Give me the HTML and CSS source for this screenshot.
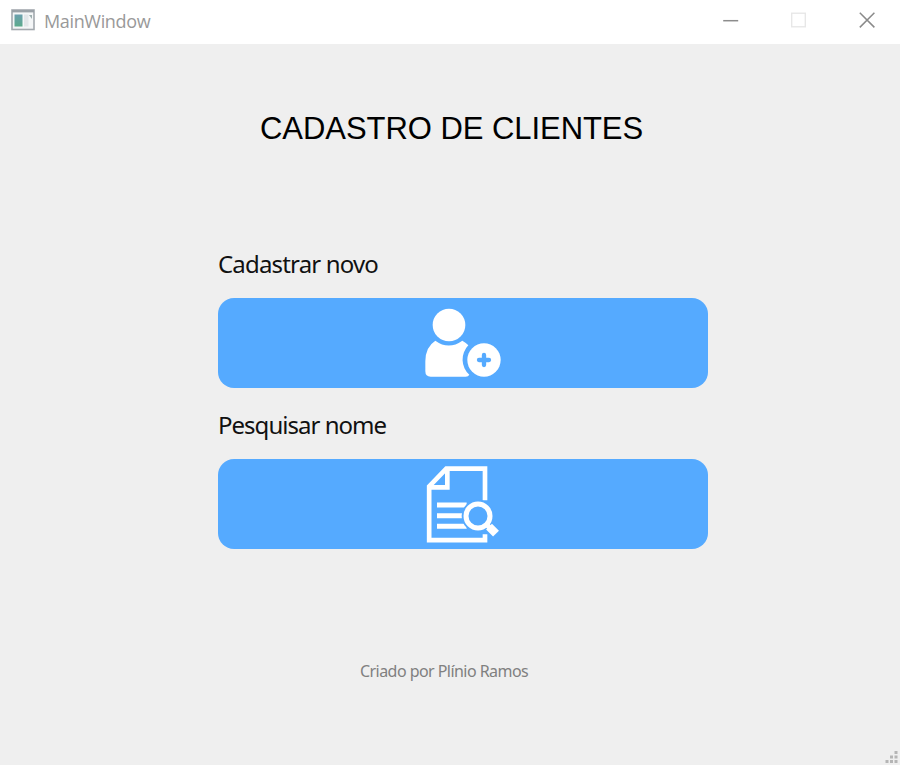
FILE: index.html
```html
<!DOCTYPE html>
<html lang="pt-BR">
<head>
<meta charset="utf-8">
<title>MainWindow</title>
<link rel="stylesheet" href="styles.css">
</head>
<body>
<div class="window">
  <header class="titlebar">
    <svg class="app-icon" width="24" height="22" viewBox="0 0 24 22">
      <rect x="1" y="1" width="22" height="19.5" fill="#f4f6f7" stroke="#a3a9ae" stroke-width="1.6"/>
      <path d="M1 2.2h22" stroke="#9aa1a7" stroke-width="2.4"/>
      <defs><linearGradient id="pane" x2="0" y2="1"><stop stop-color="#6b9fae"/><stop offset="1" stop-color="#5caa8c"/></linearGradient></defs>
      <rect x="3.500" y="5.500" width="8" height="12" fill="url(#pane)"/>
      <rect x="13" y="5.500" width="4.500" height="12" fill="#e2e6e9"/>
      <path d="M18 6h3v4z" fill="#9eafaf"/>
    </svg>
    <span class="caption">MainWindow</span>
    <div class="controls">
      <svg width="16" height="16" viewBox="0 0 16 16"><path d="M.2 8.700h15" stroke="#8c8c8c" stroke-width="1.500"/></svg>
      <svg width="16" height="16" viewBox="0 0 16 16"><rect x=".7" y="1.200" width="13.600" height="13.600" fill="none" stroke="#e6e6e6" stroke-width="1.300"/></svg>
      <svg width="16" height="16" viewBox="0 0 16 16"><path d="M.8.8l14.600 14.600M15.400.8L.8 15.400" stroke="#8a8a8a" stroke-width="1.500"/></svg>
    </div>
  </header>
  <main class="content">
    <h1 class="title">CADASTRO DE CLIENTES</h1>
    <section class="actions">
      <label class="label" for="add">Cadastrar novo</label>
      <button class="action" id="add">
        <svg width="110" height="90" viewBox="-6 9 330 270">
          <circle cx="117" cy="90" r="49" fill="#fff"/>
          <path d="M76 137Q116 166 157 137Q168 143 175 151A61 61 0 0 0 178 239Q175 245 167 245H62Q46 245 46 229V199Q46 156 76 137Z" fill="#fff"/>
          <circle cx="222" cy="195" r="50" fill="#fff"/>
          <path d="M222 180v30M207 195h30" stroke="#55aaff" stroke-width="13" stroke-linecap="round"/>
        </svg>
      </button>
      <label class="label label-search" for="search">Pesquisar nome</label>
      <button class="action" id="search">
        <svg width="110" height="90" viewBox="-6 12 330 270">
          <path d="M225 136V41H109L57.500 94V255.500H225V238M57.500 97H112V41" fill="none" stroke="#fff" stroke-width="14"/>
          <path d="M81 150H170M81 182H156M81 214H170" stroke="#fff" stroke-width="15"/>
          <circle cx="204" cy="183" r="49" fill="#55aaff"/>
          <circle cx="204" cy="183" r="36" fill="none" stroke="#fff" stroke-width="15"/>
          <path d="M228 207l16 16" stroke="#fff" stroke-width="15"/>
          <path d="M237 215l21 21" stroke="#fff" stroke-width="25"/>
        </svg>
      </button>
    </section>
    <p class="credit">Criado por Plínio Ramos</p>
  </main>
  <svg class="grip" width="13" height="12" viewBox="0 0 13 12" fill="#b5b5b5"><path d="M9.500 0h3v3h-3zM5 4.500h3v3H5zM9.500 4.500h3v3h-3zM.5 9h3v3h-3zM5 9h3v3H5zM9.500 9h3v3h-3z"/></svg>
</div>
</body>
</html>
```
FILE: styles.css
```css
* { box-sizing: border-box; }
body { margin: 0; }
.window {
  position: relative;
  width: 900px;
  height: 765px;
  overflow: hidden;
  background: #efefef;
  font-family: "Noto Sans", sans-serif;
}
.titlebar {
  display: flex;
  align-items: center;
  height: 44px;
  padding: 0 25px 4px 11px;
  background: #fff;
}
.app-icon { margin-right: 9px; }
.caption {
  color: #999;
  font-family: "Open Sans", sans-serif;
  font-size: 18px;
  letter-spacing: -0.35px;
  line-height: 24px;
  margin-top: 2px;
}
.controls {
  display: flex;
  gap: 52px;
  margin-left: auto;
}
.content {
  display: flex;
  flex-direction: column;
}
.title {
  margin: 65px 0 0 260px;
  color: #000;
  font: 400 31px/40px "Liberation Sans", sans-serif;
  letter-spacing: -0.05px;
  white-space: nowrap;
}
.actions {
  display: flex;
  flex-direction: column;
  width: 490px;
  margin: 99px 0 0 218px;
}
.label {
  height: 32px;
  margin-bottom: 18px;
  color: #111;
  font-size: 24px;
  letter-spacing: -0.83px;
  line-height: 32px;
  white-space: nowrap;
}
.label-search {
  margin-top: 21px;
  letter-spacing: -0.98px;
}
.action {
  display: flex;
  align-items: center;
  justify-content: center;
  height: 90px;
  padding: 0;
  border: 0;
  border-radius: 16px;
  background: #55aaff;
}
.credit {
  margin: 110px 0 0 360px;
  color: #808080;
  font-size: 16px;
  letter-spacing: -0.55px;
  line-height: 24px;
  white-space: nowrap;
}
.grip {
  position: absolute;
  right: 2px;
  bottom: 2px;
}
```
